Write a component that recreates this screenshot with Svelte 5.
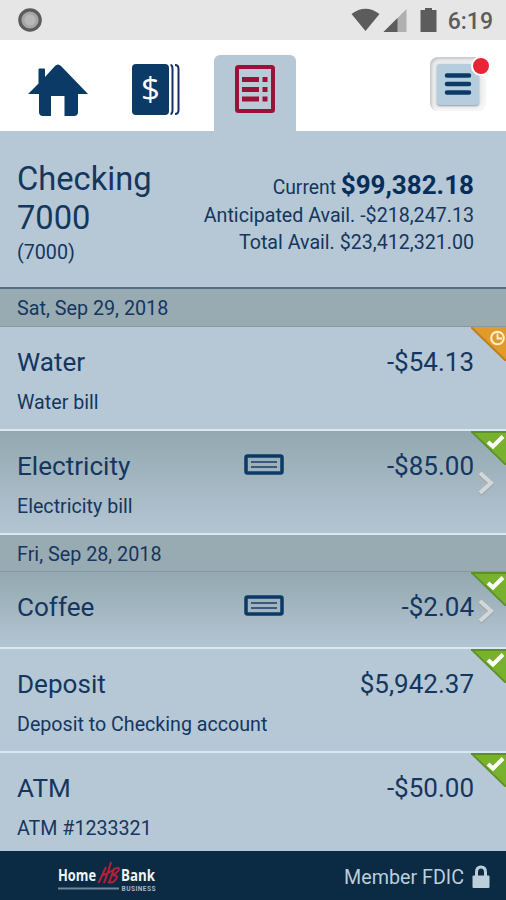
<script>
    const days = [
        {
            date: "Sat, Sep 29, 2018",
            items: [
                { name: "Water", amount: "-$54.13", memo: "Water bill", status: "pending" },
                { name: "Electricity", amount: "-$85.00", memo: "Electricity bill", status: "cleared", check: true },
            ],
        },
        {
            date: "Fri, Sep 28, 2018",
            items: [
                { name: "Coffee", amount: "-$2.04", status: "cleared", check: true },
                { name: "Deposit", amount: "$5,942.37", memo: "Deposit to Checking account", status: "cleared" },
                { name: "ATM", amount: "-$50.00", memo: "ATM #1233321", status: "cleared" },
            ],
        },
    ];
</script>

<div class="screen">
    <div class="status-bar">
        <svg width="26" height="26" viewBox="0 0 26 26">
            <circle cx="13" cy="13" r="10.2" fill="#a6a6a6" stroke="#5c5c5c" stroke-width="3.2" />
            <circle cx="13" cy="13" r="5.5" fill="#b8b8b8" />
        </svg>
        <div class="status-right">
            <svg width="90" height="26" viewBox="0 0 90 26">
                <path d="M1.5 7 Q15.5 -3.5 29.5 7 L15.5 24Z" fill="#5c5c5c" />
                <path d="M56.5 2V25H33.5Z" fill="#b0b0b0" />
                <path d="M47.5 11V25H33.5Z" fill="#5c5c5c" />
                <path d="M75 1h7v2h4.5v22h-16V3H75z" fill="#5c5c5c" />
            </svg>
            <span class="time">6:19</span>
        </div>
    </div>

    <nav class="tabs">
        <button class="tab">
            <svg width="60" height="54" viewBox="0 0 60 54">
                <path d="M0 30 L10.5 19.5V5.5Q10.5 4.5 11.5 4.5H16Q17 4.5 17 5.5V13L27 2Q30 -1 33 2L60 30H50V48Q50 52 46 52H36.5V32H23V52H15Q11 52 11 48V30Z" fill="#0b3a66" />
            </svg>
        </button>
        <button class="tab">
            <svg width="50" height="54" viewBox="0 0 50 54">
                <rect x="1" y="0" width="37" height="51" rx="4" fill="#0b3a66" />
                <path d="M39.5 1q2 0 2 4v41q0 4-2 4M44 1q3.5 0 3.5 4v41q0 4-3.5 4" fill="none" stroke="#17306a" stroke-width="2" />
                <text class="dollar" x="19.5" y="37" text-anchor="middle">$</text>
            </svg>
        </button>
        <button class="tab active">
            <svg width="42" height="50" viewBox="0 0 42 50">
                <rect x="3" y="3" width="36" height="44" rx="1.5" fill="#b9cad8" stroke="#9b1238" stroke-width="4" />
                <path d="M8 15.5H25M8 25.5H25M8 35H25M28.5 15.5h5M28.5 25.5h5M28.5 35h5" stroke="#9b1238" stroke-width="5" />
            </svg>
        </button>
        <button class="menu">
            <span class="menu-face">
                <svg width="28" height="24" viewBox="0 0 28 24">
                    <path d="M3 3.5H25M3 12H25M3 20.5H25" stroke="#0b3a66" stroke-width="4.5" stroke-linecap="round" />
                </svg>
            </span>
            <span class="dot"></span>
        </button>
    </nav>

    <header class="account">
        <div class="account-name">
            <h1>Checking<br />7000</h1>
            <span>(7000)</span>
        </div>
        <div class="balances">
            <div class="current">Current <b>$99,382.18</b></div>
            <div>Anticipated Avail. -$218,247.13</div>
            <div>Total Avail. $23,412,321.00</div>
        </div>
    </header>

    {#each days as day}
        <div class="date">{day.date}</div>
        {#each day.items as item}
            <div class="row" class:shaded={item.check} class:short={!item.memo}>
                <div class="line">
                    <span class="name">{item.name}</span>
                    {#if item.check}
                        <svg class="check" width="40" height="21" viewBox="0 0 40 21">
                            <rect x="2" y="2" width="36" height="17" rx="1.5" fill="none" stroke="#0b3a66" stroke-width="3.5" />
                            <path d="M7 8H33M7 13H33" stroke="#395a7c" stroke-width="2" />
                        </svg>
                    {/if}
                    <span class="amount">{item.amount}</span>
                </div>
                {#if item.memo}
                    <div class="memo">{item.memo}</div>
                {/if}
                <svg class="corner" width="35" height="34" viewBox="0 0 35 34">
                    {#if item.status === "pending"}
                        <path d="M0 0H35V34Z" fill="#e29a2b" />
                        <path d="M0 0L35 34" stroke="#bd7f26" stroke-width="2" />
                        <circle cx="26.5" cy="11" r="6.3" fill="none" stroke="#fff1d4" stroke-width="2" />
                        <path d="M26.5 6.5V11.5H31" fill="none" stroke="#fff1d4" stroke-width="1.8" />
                    {:else}
                        <path d="M0 0H35V34Z" fill="#77b12d" />
                        <path d="M0 1H35M0 0L35 34" stroke="#5c9029" stroke-width="1.8" />
                        <path d="M17 11L22 15.5L32 5.5" fill="none" stroke="#fff" stroke-width="4" />
                    {/if}
                </svg>
                {#if item.check}
                    <svg class="arrow" width="17" height="26" viewBox="0 0 17 26">
                        <path d="M2 3L13 13L2 23" fill="none" stroke="#98a5ae" stroke-width="4.5" />
                        <path d="M2 2L13 12L2 22" fill="none" stroke="#d4d6d7" stroke-width="4" />
                    </svg>
                {/if}
            </div>
        {/each}
    {/each}

    <footer>
        <svg class="logo" width="104" height="34" viewBox="0 0 104 34">
            <text class="brand" x="0" y="21" textLength="38" lengthAdjust="spacingAndGlyphs">Home</text>
            <text class="brand" x="63" y="21" textLength="34" lengthAdjust="spacingAndGlyphs">Bank</text>
            <path d="M40.5 23L48 7M46 23Q51 10 53 2M43 16Q51 13 57 9M51 23L56 9Q63 6 60 11Q58 14 54 15Q61 15 58 19Q55 24 50 22" fill="none" stroke="#b51f3a" stroke-width="2" />
            <path d="M0 28.5H61" stroke="#71879b" stroke-width="1.8" />
            <text class="sub" x="63.5" y="31" textLength="34">BUSINESS</text>
        </svg>
        <div class="fdic">
            <span>Member FDIC</span>
            <svg width="18" height="24" viewBox="0 0 18 24">
                <path d="M4.5 12V7Q4.5 2 9 2T13.5 7V12" fill="none" stroke="#bdcedb" stroke-width="3" />
                <rect x="0.5" y="10.5" width="17" height="12.5" rx="1" fill="#bdcedb" />
            </svg>
        </div>
    </footer>
</div>

<style>
    :global(body) {
        margin: 0;
    }

    .screen {
        width: 506px;
        height: 900px;
        overflow: hidden;
        display: flex;
        flex-direction: column;
        background: #b6c8d5;
        color: #14365f;
        font-family: Roboto, sans-serif;
    }

    .screen > * {
        flex-shrink: 0;
        box-sizing: border-box;
    }

    svg {
        display: block;
    }

    .status-bar {
        height: 40px;
        padding: 0 13px 0 17px;
        display: flex;
        align-items: center;
        justify-content: space-between;
        background: #e6e6e6;
    }

    .status-right {
        display: flex;
        align-items: center;
        gap: 8px;
    }

    .time {
        padding-top: 2px;
        font-size: 23px;
        font-weight: 500;
        color: #5c5c5c;
    }

    .tabs {
        height: 91px;
        padding: 0 20px 0 17px;
        display: flex;
        align-items: flex-end;
        background: #fff;
    }

    button {
        padding: 0;
        border: 0;
        background: none;
        font-family: inherit;
    }

    .tab {
        width: 82px;
        height: 76px;
        margin-right: 16px;
        display: flex;
        justify-content: center;
        padding-top: 9px;
    }

    .tab.active {
        margin-left: 1px;
        background: #b6c8d5;
        border-radius: 6px 6px 0 0;
    }

    .dollar {
        font-family: "Open Sans", sans-serif;
        font-size: 33px;
        fill: #fff;
    }

    .menu {
        position: relative;
        width: 56px;
        height: 54px;
        margin: 0 0 20px auto;
        display: flex;
        align-items: center;
        justify-content: center;
        border-radius: 8px;
        background: #e8eaeb;
        box-shadow: inset 2px 2px 2px #c9cbcd, inset -3px -3px 4px #f8f8f8;
    }

    .menu-face {
        width: 42px;
        height: 41px;
        display: flex;
        align-items: center;
        justify-content: center;
        background: #b6cddd;
        border-radius: 3px;
        box-shadow: 0 1px 2px #8d9ba5;
    }

    .dot {
        position: absolute;
        top: -1px;
        right: -5px;
        width: 16px;
        height: 16px;
        border-radius: 50%;
        background: #e82536;
        border: 2px solid #fff;
    }

    .account {
        height: 158px;
        padding: 29px 32px 0 17px;
        display: flex;
        justify-content: space-between;
        border-bottom: 2px solid #536d85;
    }

    h1 {
        margin: 0;
        font-size: 32.7px;
        font-weight: 400;
        line-height: 38.5px;
    }

    .account-name span {
        display: block;
        font-size: 19.7px;
        line-height: 31px;
    }

    .balances {
        padding-top: 11px;
        text-align: right;
        font-size: 19.65px;
        line-height: 27px;
    }

    .current {
        height: 31px;
        line-height: 29px;
        font-size: 19.3px;
    }

    .current b {
        font-size: 26px;
        color: #062e5b;
    }

    .date {
        height: 38px;
        padding-left: 17px;
        font-size: 19.75px;
        line-height: 40px;
        background: #98abb2;
        border-bottom: 1px solid #8799a1;
    }

    .row + .date {
        height: 37px;
        line-height: 39px;
    }

    .row {
        position: relative;
        height: 104px;
        padding: 18px 32px 0 17px;
        border-bottom: 2px solid #dce7f1;
    }

    .row.shaded {
        background: linear-gradient(#93a8b0, #b3c5d3);
    }

    .row.short {
        height: 77px;
    }

    .line {
        display: grid;
        grid-template-columns: 227px 40px 1fr;
        align-items: center;
        height: 34px;
        font-size: 26.1px;
    }

    .check {
        margin-bottom: 4px;
    }

    .amount {
        grid-column: 3;
        text-align: right;
        font-size: 26px;
    }

    .memo {
        margin-top: 8px;
        font-size: 19.65px;
        line-height: 31px;
    }

    .corner {
        position: absolute;
        top: 0;
        right: 0;
    }

    .arrow {
        position: absolute;
        top: 40px;
        right: 11px;
    }

    .short .arrow {
        top: 27px;
    }

    .row:nth-last-child(2) {
        height: 98px;
        border-bottom: 0;
    }

    footer {
        flex: 1;
        padding: 2px 16px 0 58px;
        display: flex;
        align-items: center;
        justify-content: space-between;
        background: #0b2a43;
        color: #bdcedb;
    }

    .logo {
        overflow: visible;
    }

    .brand {
        font-family: "Open Sans", sans-serif;
        font-size: 15.5px;
        font-weight: 700;
        fill: #f0f4f7;
    }

    .sub {
        font-size: 6.5px;
        font-weight: 700;
        fill: #a9b8c5;
    }

    .fdic {
        display: flex;
        align-items: center;
        gap: 8px;
        font-size: 19.7px;
    }

    .fdic span {
        padding-top: 2px;
    }
</style>
